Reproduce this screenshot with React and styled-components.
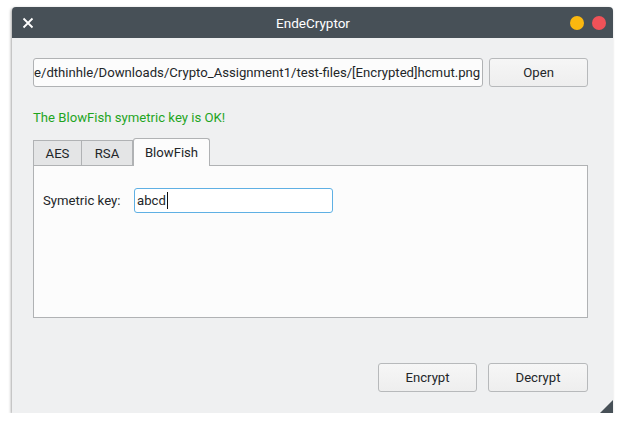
import React from "react";
import styled, { createGlobalStyle } from "styled-components";

const Global = createGlobalStyle`
  body {
    margin: 0;
    background: #ffffff;
    font-family: Roboto, "Noto Sans", sans-serif;
    font-size: 13.15px;
    color: #232629;
  }
`;

const Page = styled.div`
  padding: 7px 0 0 12px;
`;

const Window = styled.div`
  position: relative;
  width: 601px;
  height: 406px;
  background: #eff0f1;
  border-radius: 4px 4px 0 0;
  box-shadow: -1px 1px 3px rgba(0, 0, 0, 0.35);
  display: flex;
  flex-direction: column;
  overflow: hidden;
`;

const TitleBar = styled.div`
  height: 31px;
  background: #475057;
  color: #ffffff;
  display: flex;
  align-items: center;
  justify-content: space-between;
  padding: 0 7px 0 10px;
  font-size: 13.5px;
`;

const CloseIcon = styled.svg`
  width: 12px;
  height: 12px;
`;

const Title = styled.div`
  flex: 1;
  text-align: center;
  padding-left: 22px;
`;

const Dots = styled.div`
  display: flex;
  gap: 8px;
`;

const Dot = styled.span`
  width: 14px;
  height: 14px;
  border-radius: 50%;
  background: ${(p) => p.color};
`;

const Body = styled.div`
  flex: 1;
  display: flex;
  flex-direction: column;
  padding: 20px 25px 21px 21px;
`;

const Row = styled.div`
  display: flex;
  gap: 6px;
  align-items: center;
`;

const PathField = styled.div`
  width: 447px;
  height: 27px;
  border: 1px solid #b0b2b4;
  border-radius: 3px;
  background: #fcfcfc;
  display: flex;
  justify-content: flex-end;
  align-items: center;
  overflow: hidden;
  white-space: nowrap;
  padding-right: 2px;
`;

const Button = styled.button`
  width: ${(p) => p.w || 99}px;
  height: 29px;
  border: 1px solid #b7b9bb;
  border-radius: 3px;
  background: linear-gradient(#f6f6f6, #eeeeee);
  font-family: inherit;
  font-size: inherit;
  color: #232629;
  padding: 0;
`;

const Status = styled.div`
  color: #1fa51f;
  margin-top: 22px;
  height: 18px;
  line-height: 18px;
`;

const Tabs = styled.div`
  display: flex;
  align-items: flex-end;
  margin-top: 11px;
  height: 28px;
`;

const Tab = styled.div`
  height: ${(p) => (p.active ? 28 : 26)}px;
  box-sizing: border-box;
  border: 1px solid #b0b2b4;
  border-bottom: ${(p) => (p.active ? "none" : "1px solid #b0b2b4")};
  border-left: ${(p) => (p.first || p.active ? "1px solid #b0b2b4" : "none")};
  border-radius: ${(p) => (p.active ? "3px 3px 0 0" : "0")};
  background: ${(p) => (p.active ? "#fcfcfc" : "#e4e5e6")};
  width: ${(p) => p.w}px;
  display: flex;
  align-items: center;
  justify-content: center;
  padding-top: ${(p) => (p.active ? 0 : 1)}px;
`;

const TabFill = styled.div`
  flex: 1;
  border-bottom: 1px solid #b0b2b4;
`;

const Panel = styled.div`
  width: 555px;
  height: 152px;
  box-sizing: border-box;
  border: 1px solid #b0b2b4;
  border-top: none;
  background: #fcfcfc;
  padding: 22px 0 0 9px;
`;

const FieldRow = styled.div`
  display: flex;
  align-items: center;
`;

const Label = styled.span`
  width: 91px;
`;

const KeyInput = styled.div`
  width: 195px;
  height: 23px;
  border: 1px solid #5fb0e4;
  border-radius: 3px;
  background: #ffffff;
  display: flex;
  align-items: center;
  padding-left: 2px;
`;

const Caret = styled.span`
  width: 1px;
  height: 17px;
  background: #111;
  margin-left: 1px;
`;

const Footer = styled.div`
  margin-top: auto;
  display: flex;
  justify-content: flex-end;
  gap: 11px;
  width: 555px;
`;

const Grip = styled.div`
  position: absolute;
  right: 0;
  bottom: 0;
  width: 0;
  height: 0;
  border-style: solid;
  border-width: 0 0 13px 13px;
  border-color: transparent transparent #475057 transparent;
`;

export default function App() {
  return (
    <Page>
      <Global />
      <Window>
        <TitleBar>
          <CloseIcon viewBox="0 0 12 12">
            <path d="M1.5 1.5 L10.5 10.5 M10.5 1.5 L1.5 10.5" stroke="#fff" strokeWidth="1.8" />
          </CloseIcon>
          <Title>EndeCryptor</Title>
          <Dots>
            <Dot color="#fbb80f" />
            <Dot color="#ef5258" />
          </Dots>
        </TitleBar>
        <Body>
          <Row>
            <PathField>/home/dthinhle/Downloads/Crypto_Assignment1/test-files/[Encrypted]hcmut.png</PathField>
            <Button>Open</Button>
          </Row>
          <Status>The BlowFish symetric key is OK!</Status>
          <Tabs>
            <Tab first w={49}>AES</Tab>
            <Tab w={51}>RSA</Tab>
            <Tab active w={77}>BlowFish</Tab>
            <TabFill />
          </Tabs>
          <Panel>
            <FieldRow>
              <Label>Symetric key:</Label>
              <KeyInput>
                abcd
                <Caret />
              </KeyInput>
            </FieldRow>
          </Panel>
          <Footer>
            <Button>Encrypt</Button>
            <Button w={100}>Decrypt</Button>
          </Footer>
        </Body>
        <Grip />
      </Window>
    </Page>
  );
}
